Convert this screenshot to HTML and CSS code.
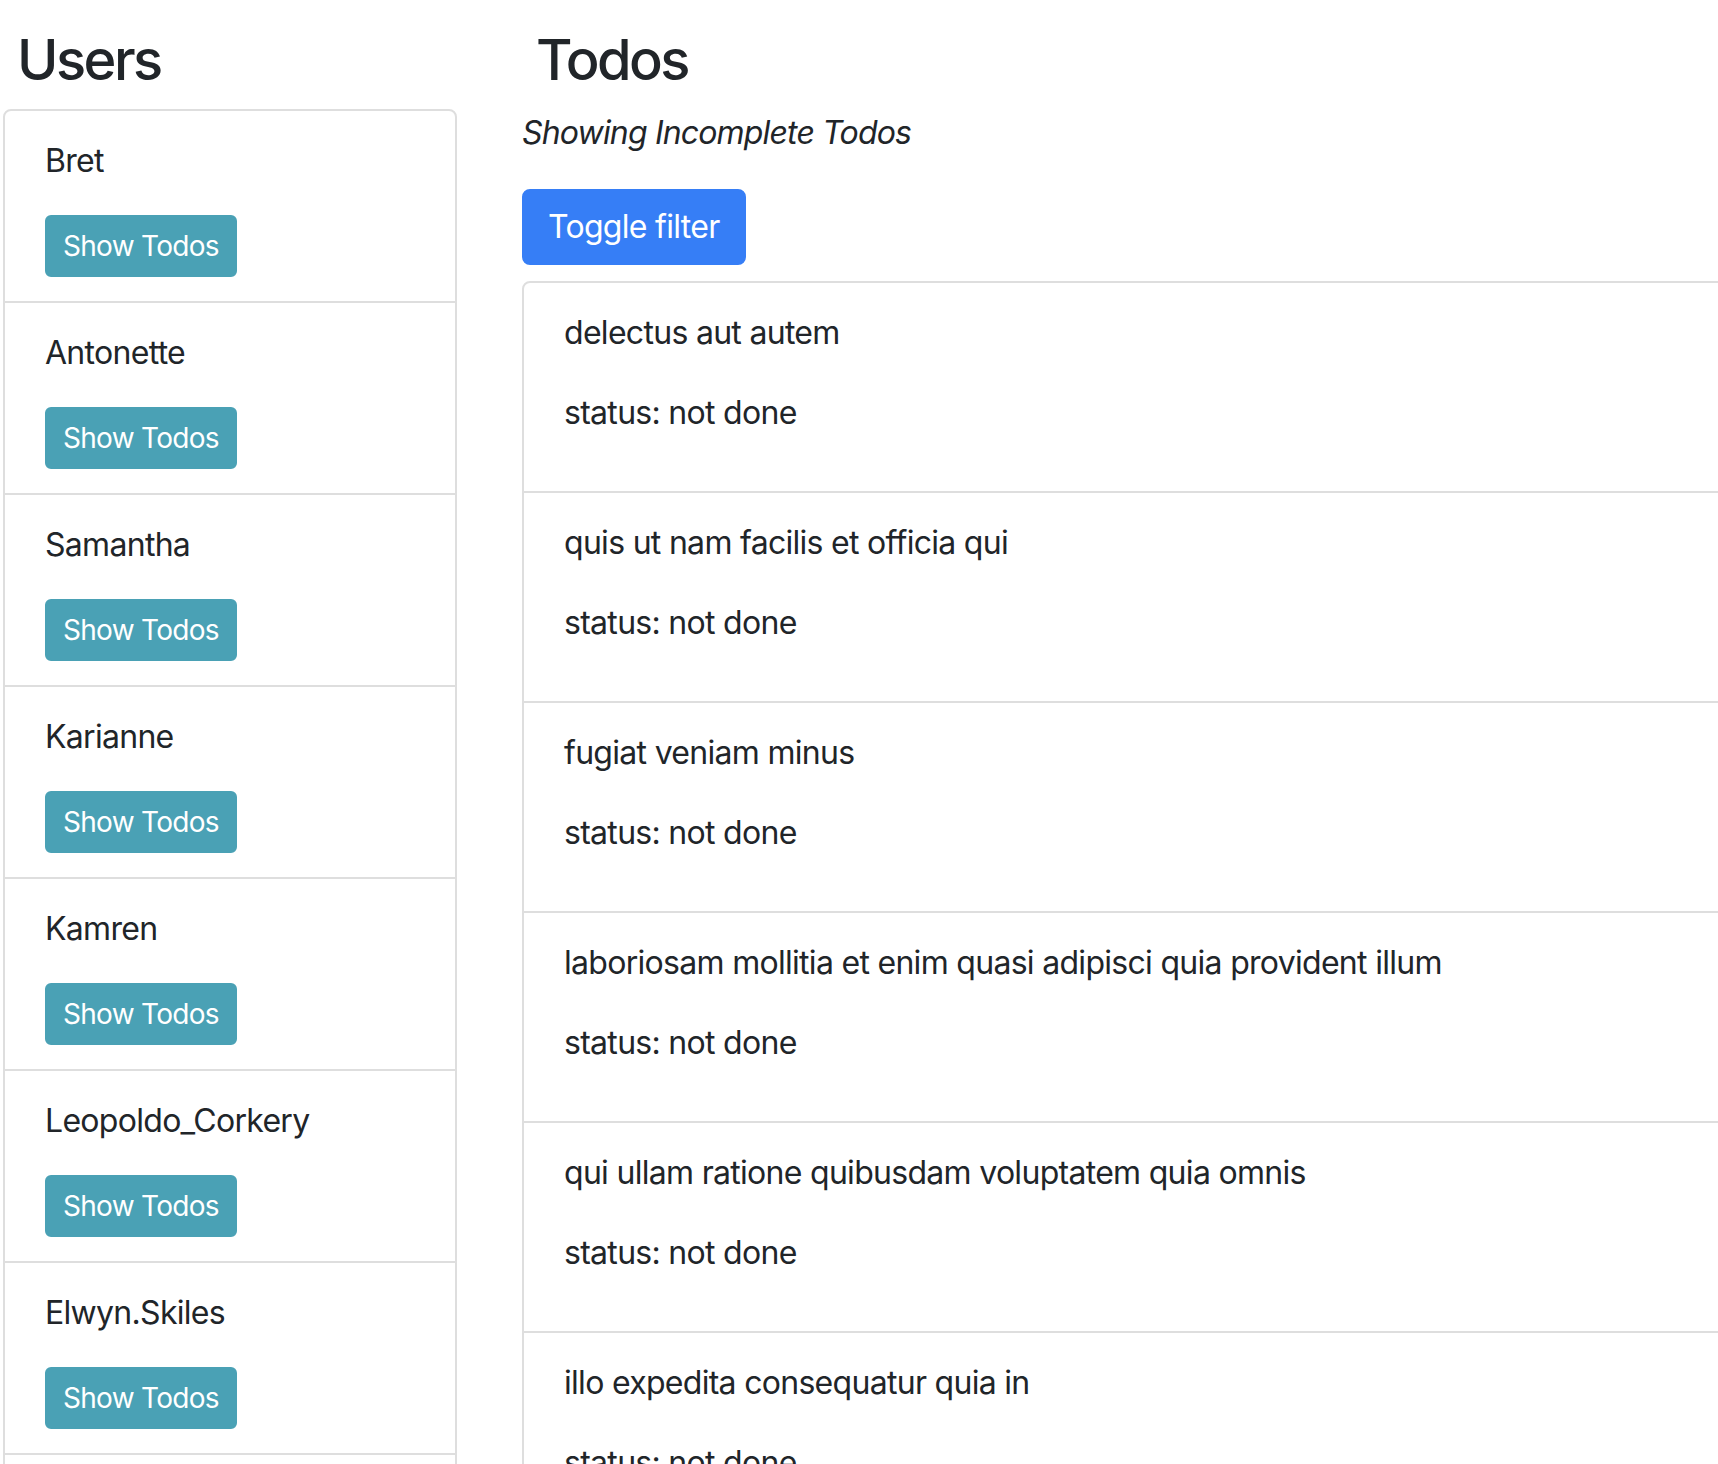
FILE: index.html
```html
<!DOCTYPE html>
<html lang="en">
<head>
<meta charset="utf-8">
<title>Users and Todos</title>
<link rel="stylesheet" href="styles.css">
</head>
<body>
<div class="page">
  <section class="users">
    <h3 class="heading">Users</h3>
    <ul class="list">
      <li class="item"><p class="text">Bret</p><button class="btn btn-info">Show Todos</button></li>
      <li class="item"><p class="text">Antonette</p><button class="btn btn-info">Show Todos</button></li>
      <li class="item"><p class="text">Samantha</p><button class="btn btn-info">Show Todos</button></li>
      <li class="item"><p class="text">Karianne</p><button class="btn btn-info">Show Todos</button></li>
      <li class="item"><p class="text">Kamren</p><button class="btn btn-info">Show Todos</button></li>
      <li class="item"><p class="text">Leopoldo_Corkery</p><button class="btn btn-info">Show Todos</button></li>
      <li class="item"><p class="text">Elwyn.Skiles</p><button class="btn btn-info">Show Todos</button></li>
      <li class="item"><p class="text">Maxime_Nienow</p><button class="btn btn-info">Show Todos</button></li>
    </ul>
  </section>
  <section class="todos">
    <h3 class="heading">Todos</h3>
    <p class="label filter-label">Showing Incomplete Todos</p>
    <button class="btn btn-primary">Toggle filter</button>
    <ul class="list todo-list">
      <li class="item"><p class="text">delectus aut autem</p><p class="text">status: not done</p></li>
      <li class="item"><p class="text">quis ut nam facilis et officia qui</p><p class="text">status: not done</p></li>
      <li class="item"><p class="text">fugiat veniam minus</p><p class="text">status: not done</p></li>
      <li class="item"><p class="text">laboriosam mollitia et enim quasi adipisci quia provident illum</p><p class="text">status: not done</p></li>
      <li class="item"><p class="text">qui ullam ratione quibusdam voluptatem quia omnis</p><p class="text">status: not done</p></li>
      <li class="item"><p class="text">illo expedita consequatur quia in</p><p class="text">status: not done</p></li>
      <li class="item"><p class="text">molestiae perspiciatis ipsa</p><p class="text">status: not done</p></li>
    </ul>
  </section>
</div>
</body>
</html>
```
FILE: styles.css
```css
html, body {
  margin: 0;
  padding: 0;
  background: #ffffff;
  overflow: hidden;
}
body {
  font-family: Inter, "Liberation Sans", sans-serif;
  font-size: 32px;
  line-height: 48px;
  letter-spacing: -0.022em;
  color: #212529;
}
.page {
  display: grid;
  grid-template-columns: 454px 1fr;
  column-gap: 65px;
  padding: 27px 0 0 3px;
  width: 1800px;
}
.heading {
  margin: 0 0 15px 0;
  padding-left: 14px;
  font-size: 56px;
  line-height: 67px;
  font-weight: 500;
  letter-spacing: -0.045em;
}
.list {
  list-style: none;
  margin: 0;
  padding: 0;
  border: 2px solid #dedede;
  border-radius: 8px;
}
.item {
  padding: 24px 40px;
  border-top: 2px solid #dedede;
}
.item:first-child {
  border-top: none;
}
.text {
  margin: 0 0 30px 0;
  padding-top: 2px;
}
.label {
  margin: 0 0 32px 0;
}
.filter-label {
  font-style: italic;
  letter-spacing: -0.026em;
}
.btn {
  font-family: inherit;
  letter-spacing: inherit;
  border: 2px solid transparent;
  color: #ffffff;
  cursor: pointer;
  display: inline-block;
}
.btn-info {
  background: #4aa1b5;
  border-color: #4aa1b5;
  font-size: 28px;
  line-height: 42px;
  padding: 8px 16px;
  border-radius: 6px;
}
.btn-primary {
  background: #367ef6;
  border-color: #367ef6;
  font-size: 32px;
  line-height: 48px;
  padding: 12px 24px;
  border-radius: 8px;
}
.todo-list {
  margin-top: 16px;
}
```
